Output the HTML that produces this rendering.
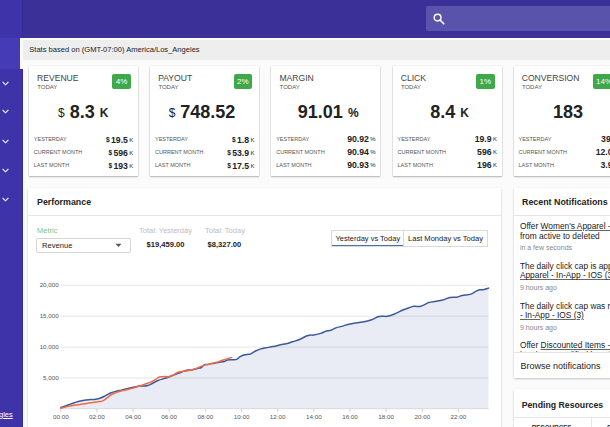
<!DOCTYPE html>
<html><head><meta charset="utf-8">
<style>
*{margin:0;padding:0;box-sizing:border-box}
html,body{width:610px;height:427px;overflow:hidden}
body{position:relative;background:#fbfbfb;font-family:"Liberation Sans",sans-serif;color:#222}
.abs{position:absolute}
#top{left:0;top:0;width:610px;height:38.4px;background:#3a3097}
#side{left:0;top:0;width:23px;height:427px;background:#3e33a9;border-right:1px solid #352c92}
#sideact{left:0;top:38.4px;width:20px;height:30.3px;background:#463bb6}
#sidestrip{left:20px;top:38.4px;width:3px;height:30.3px;background:#fafafa}
#search{left:426px;top:6px;width:190px;height:25px;background:#5a53ab;border-radius:2px}
#stats{left:23px;top:39px;width:587px;height:20.8px;background:#eeeeee;border-top:0.6px solid #fcfcf0}
#stats span{position:absolute;left:6.3px;top:5px;font-size:7.55px;line-height:9px;color:#222}
.chev{position:absolute;left:2px;width:7px;height:5px}
.card{position:absolute;top:66.2px;width:109px;height:110px;background:#fff;box-shadow:0 1px 1.5px rgba(0,0,0,.28),0 0 1.5px rgba(0,0,0,.12)}
.card .t{position:absolute;left:8.2px;top:7px;font-size:8.6px;line-height:10px;color:#444}
.card .s{position:absolute;left:8.4px;top:17.2px;font-size:6px;line-height:8px;color:#555}
.badge{position:absolute;right:7px;top:8px;padding:0 3.4px;height:15px;background:#3ea84b;color:#fff;border-radius:2px;font-size:8px;line-height:15px;text-align:center}
.big{position:absolute;left:0;top:36px;width:109px;text-align:center;font-size:18px;line-height:20px;font-weight:bold;white-space:nowrap}
.big .u{font-size:12px;font-weight:normal;vertical-align:1px}
.big .k{font-size:12px;vertical-align:1.5px}
.row{position:absolute;left:5px;width:99.5px;height:9px;font-size:5.5px;line-height:9px;color:#555}
.row b{position:absolute;right:0;top:-0.6px;font-size:8.7px;color:#222;white-space:nowrap}
.row b i{font-style:normal;font-weight:normal;font-size:6px;margin-left:1.4px;vertical-align:0.8px}
.row b i.d{font-weight:bold;font-size:6.6px;margin-left:0;margin-right:1.3px;vertical-align:0.8px}
.panel{position:absolute;background:#fff;box-shadow:0 1px 2px rgba(0,0,0,.22)}
.yl{position:absolute;left:20px;width:38.6px;text-align:right;font-size:6.2px;line-height:9px;color:#555}
.xl{position:absolute;top:412.1px;width:30px;text-align:center;font-size:6.25px;line-height:9px;color:#555}
u{text-decoration-color:#666}
.nl{font-size:8.35px;line-height:9.6px;color:#222;white-space:nowrap}
.ns{font-size:7px;line-height:14.4px;color:#888;white-space:nowrap}
</style></head><body>
<div id="top" class="abs"></div>
<div id="search" class="abs">
<svg class="abs" style="left:7px;top:7px" width="12" height="12" viewBox="0 0 12 12"><circle cx="4.6" cy="4.6" r="3.4" fill="none" stroke="#fff" stroke-width="1.4"/><line x1="7" y1="7" x2="10.8" y2="10.8" stroke="#fff" stroke-width="1.6" stroke-linecap="round"/></svg>
</div>
<div id="side" class="abs"></div>
<div id="sideact" class="abs"></div>
<div id="sidestrip" class="abs"></div>
<svg class="chev" style="top:80.7px" viewBox="0 0 7 5"><polyline points="0.6,0.8 3.5,3.8 6.4,0.8" fill="none" stroke="#fff" stroke-width="1.1"/></svg>
<svg class="chev" style="top:109.3px" viewBox="0 0 7 5"><polyline points="0.6,0.8 3.5,3.8 6.4,0.8" fill="none" stroke="#fff" stroke-width="1.1"/></svg>
<svg class="chev" style="top:138.8px" viewBox="0 0 7 5"><polyline points="0.6,0.8 3.5,3.8 6.4,0.8" fill="none" stroke="#fff" stroke-width="1.1"/></svg>
<svg class="chev" style="top:168.1px" viewBox="0 0 7 5"><polyline points="0.6,0.8 3.5,3.8 6.4,0.8" fill="none" stroke="#fff" stroke-width="1.1"/></svg>
<svg class="chev" style="top:197.4px" viewBox="0 0 7 5"><polyline points="0.6,0.8 3.5,3.8 6.4,0.8" fill="none" stroke="#fff" stroke-width="1.1"/></svg>
<div class="abs" style="left:-1px;top:410px;font-size:7.5px;line-height:10px;color:#fff;text-decoration:underline">gles</div>

<div id="stats" class="abs"><span>Stats based on (GMT-07:00) America/Los_Angeles</span></div>

<!-- cards -->
<div class="card" style="left:28.8px">
 <div class="t">REVENUE</div><div class="s">TODAY</div><div class="badge">4%</div>
 <div class="big"><span class="u">$</span> 8.3 <span class="k">K</span></div>
 <div class="row" style="top:69px">YESTERDAY<b><i class="d">$</i>19.5<i>K</i></b></div>
 <div class="row" style="top:82px">CURRENT MONTH<b><i class="d">$</i>596<i>K</i></b></div>
 <div class="row" style="top:95px">LAST MONTH<b><i class="d">$</i>193<i>K</i></b></div>
</div>
<div class="card" style="left:150px">
 <div class="t">PAYOUT</div><div class="s">TODAY</div><div class="badge">2%</div>
 <div class="big"><span class="u">$</span> 748.52&nbsp;</div>
 <div class="row" style="top:69px">YESTERDAY<b><i class="d">$</i>1.8<i>K</i></b></div>
 <div class="row" style="top:82px">CURRENT MONTH<b><i class="d">$</i>53.9<i>K</i></b></div>
 <div class="row" style="top:95px">LAST MONTH<b><i class="d">$</i>17.5<i>K</i></b></div>
</div>
<div class="card" style="left:271.2px">
 <div class="t">MARGIN</div><div class="s">TODAY</div>
 <div class="big">&nbsp;91.01 <span class="k">%</span></div>
 <div class="row" style="top:69px">YESTERDAY<b>90.92<i>%</i></b></div>
 <div class="row" style="top:82px">CURRENT MONTH<b>90.94<i>%</i></b></div>
 <div class="row" style="top:95px">LAST MONTH<b>90.93<i>%</i></b></div>
</div>
<div class="card" style="left:392.5px">
 <div class="t">CLICK</div><div class="s">TODAY</div><div class="badge">1%</div>
 <div class="big">&nbsp;8.4 <span class="k">K</span></div>
 <div class="row" style="top:69px">YESTERDAY<b>19.9<i>K</i></b></div>
 <div class="row" style="top:82px">CURRENT MONTH<b>596<i>K</i></b></div>
 <div class="row" style="top:95px">LAST MONTH<b>196<i>K</i></b></div>
</div>
<div class="card" style="left:513.5px">
 <div class="t">CONVERSION</div><div class="s">TODAY</div><div class="badge">14%</div>
 <div class="big">183</div>
 <div class="row" style="top:69px">YESTERDAY<b>39.2</b></div>
 <div class="row" style="top:82px">CURRENT MONTH<b>12.0<i>K</i></b></div>
 <div class="row" style="top:95px">LAST MONTH<b>3.9<i>K</i></b></div>
</div>

<!-- performance panel -->
<div class="panel" style="left:28px;top:188px;width:473px;height:260px"></div>
<div class="abs" style="left:37px;top:197px;font-size:8.85px;line-height:10px;font-weight:bold;color:#222">Performance</div>
<div class="abs" style="left:28px;top:215px;width:473px;height:1px;background:#e6e6e6"></div>
<div class="abs" style="left:37px;top:226px;font-size:7.5px;line-height:9px;color:#7cc68b">Metric</div>
<div class="abs" style="left:36px;top:238px;width:95px;height:15px;border:1px solid #d6d6d6;border-radius:2px;background:#fff"></div>
<div class="abs" style="left:42px;top:240.5px;font-size:7.6px;line-height:9px;color:#222">Revenue</div>
<svg class="abs" style="left:115px;top:243px" width="7" height="5" viewBox="0 0 7 5"><polygon points="0.5,0.8 6.5,0.8 3.5,4" fill="#555"/></svg>
<div class="abs" style="left:139px;top:226px;font-size:7.5px;line-height:9px;color:#bdbdbd">Total: Yesterday</div>
<div class="abs" style="left:146.5px;top:240px;font-size:7.6px;line-height:9px;font-weight:bold;color:#222">$19,459.00</div>
<div class="abs" style="left:205px;top:226px;font-size:7.5px;line-height:9px;color:#bdbdbd">Total: Today</div>
<div class="abs" style="left:207.5px;top:240px;font-size:7.6px;line-height:9px;font-weight:bold;color:#222">$8,327.00</div>
<div class="abs" style="left:331px;top:230px;width:157px;height:17px;border:1px solid #d9d9d9;background:#fff"></div>
<div class="abs" style="left:403px;top:230px;width:1px;height:17px;background:#d9d9d9"></div>
<div class="abs" style="left:331.7px;top:244.6px;width:71.5px;height:1.2px;background:#4d6fb3"></div>
<div class="abs" style="left:335.5px;top:234px;font-size:7.5px;line-height:9px;color:#222;white-space:nowrap">Yesterday vs Today</div>
<div class="abs" style="left:408px;top:234px;font-size:7.55px;line-height:9px;color:#222;white-space:nowrap">Last Monday vs Today</div>
<svg class="abs" style="left:0;top:0" width="610" height="427" viewBox="0 0 610 427">
<path d="M60.90,407.40 C61.78,407.12 64.63,406.25 66.20,405.70 C67.77,405.15 68.93,404.60 70.30,404.10 C71.67,403.60 72.90,403.18 74.40,402.70 C75.90,402.22 77.67,401.62 79.30,401.20 C80.93,400.78 82.28,400.47 84.20,400.20 C86.12,399.93 88.88,399.77 90.80,399.60 C92.72,399.43 94.07,399.47 95.70,399.20 C97.33,398.93 99.10,398.52 100.60,398.00 C102.10,397.48 103.15,396.88 104.70,396.10 C106.25,395.32 108.22,394.05 109.90,393.30 C111.58,392.55 112.88,392.12 114.80,391.60 C116.72,391.08 119.20,390.73 121.40,390.20 C123.60,389.67 125.82,388.93 128.00,388.40 C130.18,387.87 132.60,387.38 134.50,387.00 C136.40,386.62 137.77,386.25 139.40,386.10 C141.03,385.95 142.93,386.20 144.30,386.10 C145.67,386.00 146.37,385.90 147.60,385.50 C148.83,385.10 149.87,384.57 151.70,383.70 C153.53,382.83 156.37,381.20 158.60,380.30 C160.83,379.40 162.92,379.05 165.10,378.30 C167.28,377.55 169.52,376.62 171.70,375.80 C173.88,374.98 176.02,374.22 178.20,373.40 C180.38,372.58 183.15,371.45 184.80,370.90 C186.45,370.35 186.73,370.30 188.10,370.10 C189.47,369.90 191.37,369.98 193.00,369.70 C194.63,369.42 196.52,368.77 197.90,368.40 C199.28,368.03 200.18,368.13 201.30,367.50 C202.42,366.87 203.52,365.12 204.60,364.60 C205.68,364.08 206.17,364.63 207.80,364.40 C209.43,364.17 212.20,363.60 214.40,363.20 C216.60,362.80 219.37,362.28 221.00,362.00 C222.63,361.72 223.12,361.85 224.20,361.50 C225.28,361.15 226.13,360.20 227.50,359.90 C228.87,359.60 230.90,359.78 232.40,359.70 C233.90,359.62 235.13,359.95 236.50,359.40 C237.87,358.85 239.23,357.17 240.60,356.40 C241.97,355.63 243.47,355.15 244.70,354.80 C245.93,354.45 247.07,354.42 248.00,354.30 C248.93,354.18 249.05,354.65 250.30,354.10 C251.55,353.55 253.75,351.87 255.50,351.00 C257.25,350.13 259.03,349.43 260.80,348.90 C262.57,348.37 264.05,348.18 266.10,347.80 C268.15,347.42 270.47,347.15 273.10,346.60 C275.73,346.05 279.55,345.00 281.90,344.50 C284.25,344.00 285.43,344.05 287.20,343.60 C288.97,343.15 290.45,342.48 292.50,341.80 C294.55,341.12 297.17,340.47 299.50,339.50 C301.83,338.53 304.75,336.73 306.50,336.00 C308.25,335.27 308.83,335.25 310.00,335.10 C311.17,334.95 311.73,335.38 313.50,335.10 C315.27,334.82 318.55,334.03 320.60,333.40 C322.65,332.77 324.05,331.83 325.80,331.30 C327.55,330.77 329.33,330.82 331.10,330.20 C332.87,329.58 334.63,328.23 336.40,327.60 C338.17,326.97 339.93,326.88 341.70,326.40 C343.47,325.92 344.93,325.22 347.00,324.70 C349.07,324.18 351.47,323.73 354.10,323.30 C356.73,322.87 359.88,322.68 362.80,322.10 C365.72,321.52 369.10,320.68 371.60,319.80 C374.10,318.92 376.03,317.38 377.80,316.80 C379.57,316.22 380.58,316.38 382.20,316.30 C383.82,316.22 385.45,316.68 387.50,316.30 C389.55,315.92 391.87,315.08 394.50,314.00 C397.13,312.92 400.97,310.80 403.30,309.80 C405.63,308.80 406.75,308.58 408.50,308.00 C410.25,307.42 411.75,306.58 413.80,306.30 C415.85,306.02 418.30,306.93 420.80,306.30 C423.30,305.67 426.30,303.33 428.80,302.50 C431.30,301.67 433.47,301.73 435.80,301.30 C438.13,300.87 440.45,300.52 442.80,299.90 C445.15,299.28 447.55,298.05 449.90,297.60 C452.25,297.15 454.85,297.55 456.90,297.20 C458.95,296.85 459.85,296.02 462.20,295.50 C464.55,294.98 468.67,294.83 471.00,294.10 C473.33,293.37 474.73,291.83 476.20,291.10 C477.67,290.37 478.62,289.93 479.80,289.70 C480.98,289.47 481.85,289.97 483.30,289.70 C484.75,289.43 487.63,288.37 488.50,288.10 L488.5,408.6 L60.9,408.6 Z" fill="#e9ecf4"/>
<line x1="60.8" y1="285.3" x2="488.5" y2="285.3" stroke="rgba(0,0,0,0.1)" stroke-width="1"/>
<line x1="60.8" y1="316.2" x2="488.5" y2="316.2" stroke="rgba(0,0,0,0.1)" stroke-width="1"/>
<line x1="60.8" y1="347.1" x2="488.5" y2="347.1" stroke="rgba(0,0,0,0.1)" stroke-width="1"/>
<line x1="60.8" y1="378.0" x2="488.5" y2="378.0" stroke="rgba(0,0,0,0.1)" stroke-width="1"/>
<line x1="60.8" y1="408.7" x2="488.5" y2="408.7" stroke="#d8d8d8" stroke-width="1"/>
<line x1="60.8" y1="408.7" x2="60.8" y2="412.4" stroke="#d0d0d0" stroke-width="0.9"/>
<line x1="96.9" y1="408.7" x2="96.9" y2="412.4" stroke="#d0d0d0" stroke-width="0.9"/>
<line x1="133.1" y1="408.7" x2="133.1" y2="412.4" stroke="#d0d0d0" stroke-width="0.9"/>
<line x1="169.2" y1="408.7" x2="169.2" y2="412.4" stroke="#d0d0d0" stroke-width="0.9"/>
<line x1="205.4" y1="408.7" x2="205.4" y2="412.4" stroke="#d0d0d0" stroke-width="0.9"/>
<line x1="241.6" y1="408.7" x2="241.6" y2="412.4" stroke="#d0d0d0" stroke-width="0.9"/>
<line x1="277.7" y1="408.7" x2="277.7" y2="412.4" stroke="#d0d0d0" stroke-width="0.9"/>
<line x1="313.8" y1="408.7" x2="313.8" y2="412.4" stroke="#d0d0d0" stroke-width="0.9"/>
<line x1="350.0" y1="408.7" x2="350.0" y2="412.4" stroke="#d0d0d0" stroke-width="0.9"/>
<line x1="386.1" y1="408.7" x2="386.1" y2="412.4" stroke="#d0d0d0" stroke-width="0.9"/>
<line x1="422.3" y1="408.7" x2="422.3" y2="412.4" stroke="#d0d0d0" stroke-width="0.9"/>
<line x1="458.4" y1="408.7" x2="458.4" y2="412.4" stroke="#d0d0d0" stroke-width="0.9"/>
<path d="M60.90,407.40 C61.78,407.12 64.63,406.25 66.20,405.70 C67.77,405.15 68.93,404.60 70.30,404.10 C71.67,403.60 72.90,403.18 74.40,402.70 C75.90,402.22 77.67,401.62 79.30,401.20 C80.93,400.78 82.28,400.47 84.20,400.20 C86.12,399.93 88.88,399.77 90.80,399.60 C92.72,399.43 94.07,399.47 95.70,399.20 C97.33,398.93 99.10,398.52 100.60,398.00 C102.10,397.48 103.15,396.88 104.70,396.10 C106.25,395.32 108.22,394.05 109.90,393.30 C111.58,392.55 112.88,392.12 114.80,391.60 C116.72,391.08 119.20,390.73 121.40,390.20 C123.60,389.67 125.82,388.93 128.00,388.40 C130.18,387.87 132.60,387.38 134.50,387.00 C136.40,386.62 137.77,386.25 139.40,386.10 C141.03,385.95 142.93,386.20 144.30,386.10 C145.67,386.00 146.37,385.90 147.60,385.50 C148.83,385.10 149.87,384.57 151.70,383.70 C153.53,382.83 156.37,381.20 158.60,380.30 C160.83,379.40 162.92,379.05 165.10,378.30 C167.28,377.55 169.52,376.62 171.70,375.80 C173.88,374.98 176.02,374.22 178.20,373.40 C180.38,372.58 183.15,371.45 184.80,370.90 C186.45,370.35 186.73,370.30 188.10,370.10 C189.47,369.90 191.37,369.98 193.00,369.70 C194.63,369.42 196.52,368.77 197.90,368.40 C199.28,368.03 200.18,368.13 201.30,367.50 C202.42,366.87 203.52,365.12 204.60,364.60 C205.68,364.08 206.17,364.63 207.80,364.40 C209.43,364.17 212.20,363.60 214.40,363.20 C216.60,362.80 219.37,362.28 221.00,362.00 C222.63,361.72 223.12,361.85 224.20,361.50 C225.28,361.15 226.13,360.20 227.50,359.90 C228.87,359.60 230.90,359.78 232.40,359.70 C233.90,359.62 235.13,359.95 236.50,359.40 C237.87,358.85 239.23,357.17 240.60,356.40 C241.97,355.63 243.47,355.15 244.70,354.80 C245.93,354.45 247.07,354.42 248.00,354.30 C248.93,354.18 249.05,354.65 250.30,354.10 C251.55,353.55 253.75,351.87 255.50,351.00 C257.25,350.13 259.03,349.43 260.80,348.90 C262.57,348.37 264.05,348.18 266.10,347.80 C268.15,347.42 270.47,347.15 273.10,346.60 C275.73,346.05 279.55,345.00 281.90,344.50 C284.25,344.00 285.43,344.05 287.20,343.60 C288.97,343.15 290.45,342.48 292.50,341.80 C294.55,341.12 297.17,340.47 299.50,339.50 C301.83,338.53 304.75,336.73 306.50,336.00 C308.25,335.27 308.83,335.25 310.00,335.10 C311.17,334.95 311.73,335.38 313.50,335.10 C315.27,334.82 318.55,334.03 320.60,333.40 C322.65,332.77 324.05,331.83 325.80,331.30 C327.55,330.77 329.33,330.82 331.10,330.20 C332.87,329.58 334.63,328.23 336.40,327.60 C338.17,326.97 339.93,326.88 341.70,326.40 C343.47,325.92 344.93,325.22 347.00,324.70 C349.07,324.18 351.47,323.73 354.10,323.30 C356.73,322.87 359.88,322.68 362.80,322.10 C365.72,321.52 369.10,320.68 371.60,319.80 C374.10,318.92 376.03,317.38 377.80,316.80 C379.57,316.22 380.58,316.38 382.20,316.30 C383.82,316.22 385.45,316.68 387.50,316.30 C389.55,315.92 391.87,315.08 394.50,314.00 C397.13,312.92 400.97,310.80 403.30,309.80 C405.63,308.80 406.75,308.58 408.50,308.00 C410.25,307.42 411.75,306.58 413.80,306.30 C415.85,306.02 418.30,306.93 420.80,306.30 C423.30,305.67 426.30,303.33 428.80,302.50 C431.30,301.67 433.47,301.73 435.80,301.30 C438.13,300.87 440.45,300.52 442.80,299.90 C445.15,299.28 447.55,298.05 449.90,297.60 C452.25,297.15 454.85,297.55 456.90,297.20 C458.95,296.85 459.85,296.02 462.20,295.50 C464.55,294.98 468.67,294.83 471.00,294.10 C473.33,293.37 474.73,291.83 476.20,291.10 C477.67,290.37 478.62,289.93 479.80,289.70 C480.98,289.47 481.85,289.97 483.30,289.70 C484.75,289.43 487.63,288.37 488.50,288.10" fill="none" stroke="#3c5a9b" stroke-width="1.5" stroke-linejoin="round" stroke-linecap="round"/>
<path d="M60.90,408.20 C61.78,407.97 63.95,407.28 66.20,406.80 C68.45,406.32 71.67,405.75 74.40,405.30 C77.13,404.85 79.87,404.53 82.60,404.10 C85.33,403.67 88.07,403.12 90.80,402.70 C93.53,402.28 97.08,401.87 99.00,401.60 C100.92,401.33 101.22,401.50 102.30,401.10 C103.38,400.70 104.37,400.03 105.50,399.20 C106.63,398.37 107.82,397.02 109.10,396.10 C110.38,395.18 111.57,394.45 113.20,393.70 C114.83,392.95 116.85,392.22 118.90,391.60 C120.95,390.98 123.32,390.53 125.50,390.00 C127.68,389.47 129.95,388.98 132.00,388.40 C134.05,387.82 135.88,387.12 137.80,386.50 C139.72,385.88 141.58,385.35 143.50,384.70 C145.42,384.05 147.88,383.12 149.30,382.60 C150.72,382.08 150.87,382.18 152.00,381.60 C153.13,381.02 154.87,379.87 156.10,379.10 C157.33,378.33 157.90,377.42 159.40,377.00 C160.90,376.58 163.47,376.62 165.10,376.60 C166.73,376.58 167.83,377.17 169.20,376.90 C170.57,376.63 171.93,375.73 173.30,375.00 C174.67,374.27 176.03,373.08 177.40,372.50 C178.77,371.92 180.00,371.73 181.50,371.50 C183.00,371.27 184.77,371.38 186.40,371.10 C188.03,370.82 189.65,370.25 191.30,369.80 C192.95,369.35 194.37,369.10 196.30,368.40 C198.23,367.70 200.83,366.30 202.90,365.60 C204.97,364.90 206.78,364.67 208.70,364.20 C210.62,363.73 212.63,363.25 214.40,362.80 C216.17,362.35 217.67,362.02 219.30,361.50 C220.93,360.98 222.57,360.25 224.20,359.70 C225.83,359.15 227.87,358.58 229.10,358.20 C230.33,357.82 231.18,357.53 231.60,357.40" fill="none" stroke="#f06a43" stroke-width="1.5" stroke-linejoin="round" stroke-linecap="round"/>
</svg>
<div class="yl" style="top:280.4px">20,000</div>
<div class="yl" style="top:311.3px">15,000</div>
<div class="yl" style="top:342.2px">10,000</div>
<div class="yl" style="top:373.1px">5,000</div>
<div class="xl" style="left:45.8px">00:00</div>
<div class="xl" style="left:81.9px">02:00</div>
<div class="xl" style="left:118.1px">04:00</div>
<div class="xl" style="left:154.2px">06:00</div>
<div class="xl" style="left:190.4px">08:00</div>
<div class="xl" style="left:226.6px">10:00</div>
<div class="xl" style="left:262.7px">12:00</div>
<div class="xl" style="left:298.8px">14:00</div>
<div class="xl" style="left:335.0px">16:00</div>
<div class="xl" style="left:371.1px">18:00</div>
<div class="xl" style="left:407.3px">20:00</div>
<div class="xl" style="left:443.4px">22:00</div>
<!-- notifications -->
<div class="panel" style="left:513.5px;top:188px;width:110px;height:189.6px"></div>
<div class="abs" style="left:522px;top:197px;font-size:8.87px;line-height:10px;font-weight:bold;color:#222;white-space:nowrap">Recent Notifications</div>
<div class="abs" style="left:513px;top:215px;width:110px;height:1px;background:#e6e6e6"></div>
<div class="abs nt" style="left:519.9px;top:222px;height:130.3px;width:100px;overflow:hidden">
<div class="nl">Offer <u>Women's Apparel - In-App</u></div>
<div class="nl">from active to deleted</div>
<div class="ns">in a few seconds</div>
<div class="nl" style="margin-top:6.2px">The daily click cap is applied to</div>
<div class="nl"><u>Apparel - In-App - IOS (3)</u></div>
<div class="ns">9 hours ago</div>
<div class="nl" style="margin-top:6.2px">The daily click cap was removed</div>
<div class="nl"><u>- In-App - IOS (3)</u></div>
<div class="ns">9 hours ago</div>
<div class="nl" style="margin-top:6.2px">Offer <u>Discounted Items - iOS</u></div>
<div class="nl">has been modified by admin</div>
</div>
<div class="abs" style="left:513px;top:352px;width:110px;height:1px;background:#e6e6e6"></div>
<div class="abs" style="left:520.4px;top:360.6px;font-size:9px;line-height:11px;color:#222;white-space:nowrap">Browse notifications</div>
<div class="panel" style="left:513.5px;top:389.3px;width:110px;height:60px"></div>
<div class="abs" style="left:521.7px;top:399.6px;font-size:8.72px;line-height:10px;font-weight:bold;color:#222;white-space:nowrap">Pending Resources</div>
<div class="abs" style="left:513.5px;top:417.3px;width:110px;height:1px;background:#e6e6e6"></div>
<div class="abs" style="left:590.5px;top:417.3px;width:1px;height:12px;background:#e6e6e6"></div>
<div class="abs" style="left:531.7px;top:423.8px;font-size:6.3px;line-height:8px;font-weight:bold;color:#333;white-space:nowrap">RESOURCES</div>
<div class="abs" style="left:607px;top:423.8px;font-size:6.3px;line-height:8px;font-weight:bold;color:#333;white-space:nowrap">S</div>
</body></html>
